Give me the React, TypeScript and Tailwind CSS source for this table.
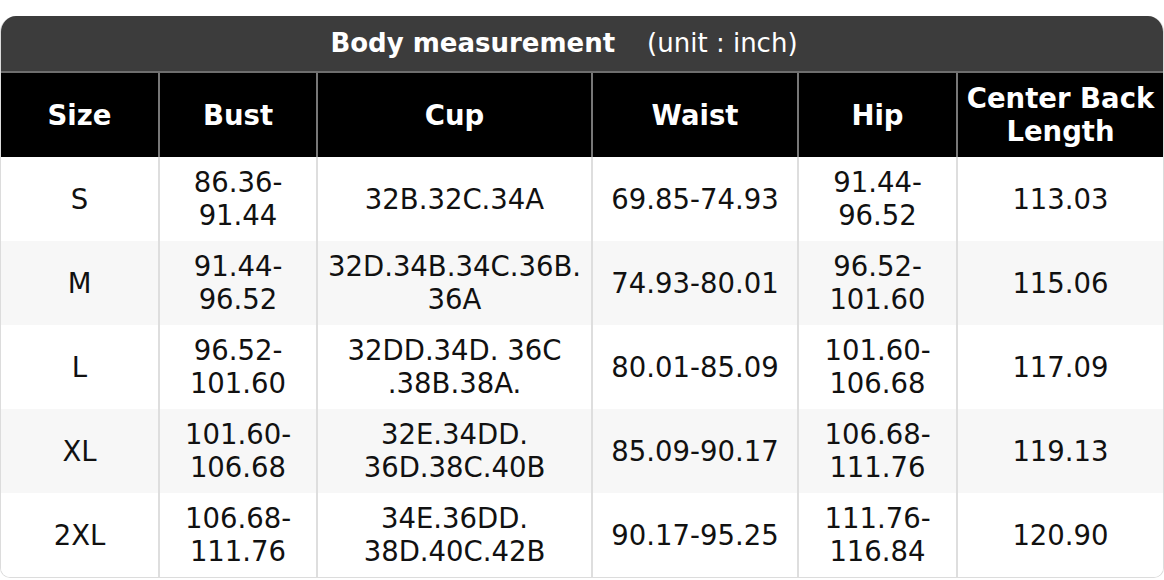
const columns = ["Size", "Bust", "Cup", "Waist", "Hip", "Center Back Length"]

const rows: string[][] = [
  ["S", "86.36-\n91.44", "32B.32C.34A", "69.85-74.93", "91.44-\n96.52", "113.03"],
  ["M", "91.44-\n96.52", "32D.34B.34C.36B.\n36A", "74.93-80.01", "96.52-\n101.60", "115.06"],
  ["L", "96.52-\n101.60", "32DD.34D. 36C\n.38B.38A.", "80.01-85.09", "101.60-\n106.68", "117.09"],
  ["XL", "101.60-\n106.68", "32E.34DD.\n36D.38C.40B", "85.09-90.17", "106.68-\n111.76", "119.13"],
  ["2XL", "106.68-\n111.76", "34E.36DD.\n38D.40C.42B", "90.17-95.25", "111.76-\n116.84", "120.90"],
]

export default function App() {
  return (
    <div className="w-[1164px] h-[580px] bg-white pt-4 font-['DejaVu_Sans',sans-serif]">
      <div className="overflow-hidden rounded-t-2xl rounded-b-[10px] border border-t-0 border-[#dcdcdc]">
        {/* title bar */}
        <div className="h-[57px] bg-[#3c3c3c] flex items-center justify-center pr-9 text-white text-[26px] border-b-2 border-[#6e6e6e]">
          <span className="font-bold">Body measurement</span>
          <span className="ml-8">(unit : inch)</span>
        </div>

        {/* column heads */}
        <div className="grid grid-cols-[157px_158px_275px_206px_159px_1fr] h-[84px] bg-black text-white">
          {columns.map((c, i) => (
            <div
              key={c}
              className={`flex items-center justify-center text-center font-bold text-[27.5px] leading-[33px] ${i > 0 ? "border-l-2 border-[#777]" : ""}`}
            >
              {c === "Center Back Length" ? (
                <span>Center Back<br />Length</span>
              ) : c}
            </div>
          ))}
        </div>

        {rows.map((r, ri) => (
          <div
            key={r[0]}
            className={`grid grid-cols-[157px_158px_275px_206px_159px_1fr] h-[84px] text-[#111] ${ri % 2 === 1 ? "bg-[#f7f7f7]" : "bg-white"}`}
          >
            {r.map((v, i) => (
              <div
                key={i}
                className={`flex items-center justify-center text-center text-[27.5px] leading-[33px] whitespace-pre ${i > 0 ? "border-l-2 border-[#dedede]" : ""}`}
              >
                {v}
              </div>
            ))}
          </div>
        ))}
      </div>
    </div>
  )
}
